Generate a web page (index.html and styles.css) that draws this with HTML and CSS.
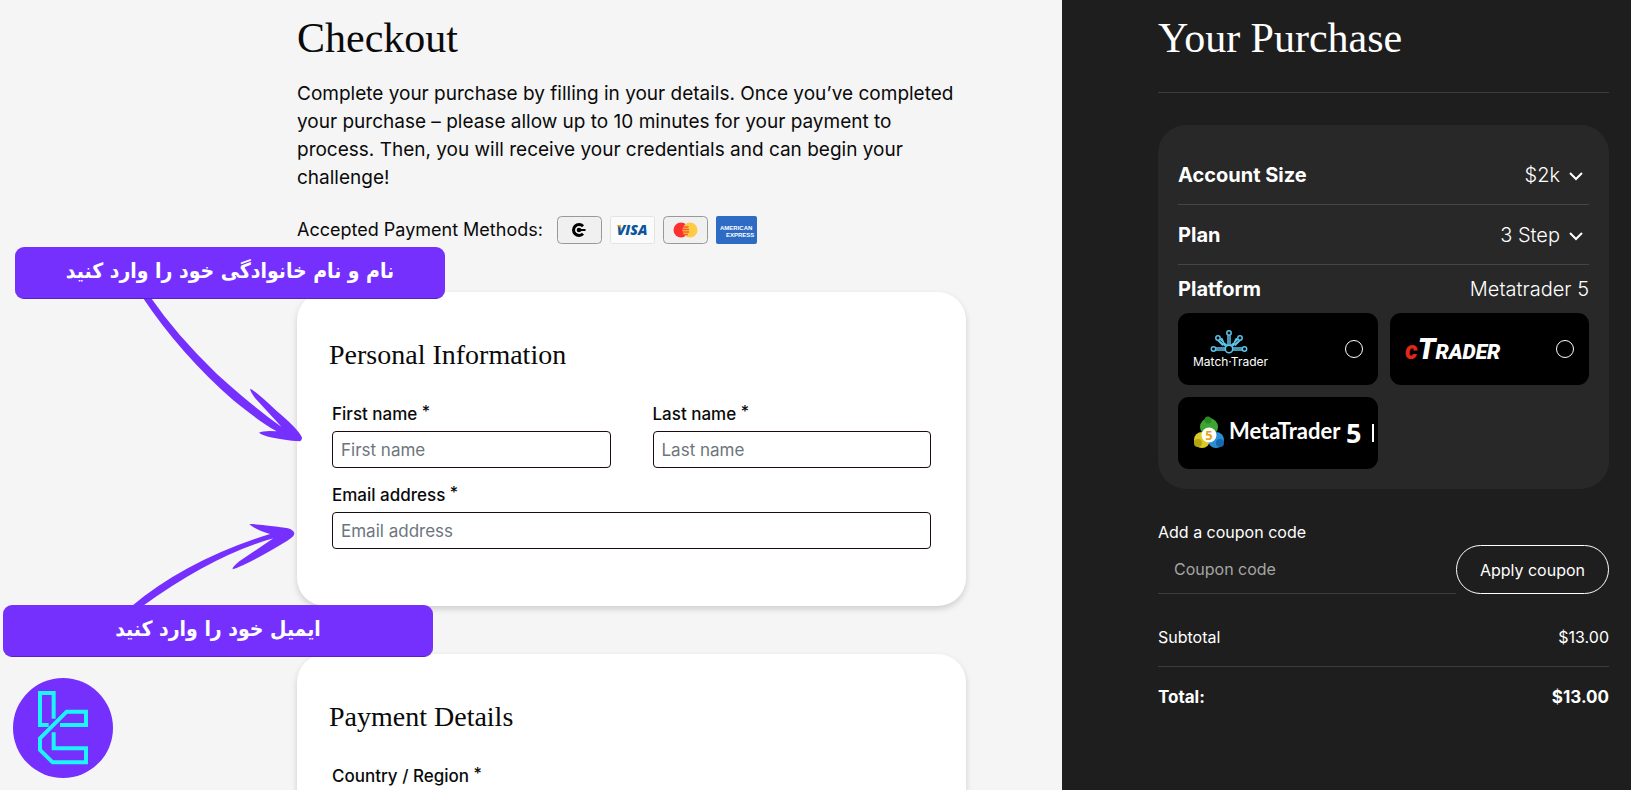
FILE: index.html
```
<!DOCTYPE html>
<html lang="en">
<head>
    <meta charset="utf-8">
    <title>Checkout</title>
    <link rel="stylesheet" href="styles.css">
</head>
<body>
    <div class="page">

        <!-- Checkout form -->
        <main class="checkout">
            <div class="checkout-inner">
                <h1>Checkout</h1>
                <p class="intro">Complete your purchase by filling in your details. Once you’ve completed your purchase – please allow up to 10 minutes for your payment to process. Then, you will receive your credentials and can begin your challenge!</p>

                <div class="methods">
                    <span>Accepted Payment Methods:</span>
                    <svg width="45" height="28" viewBox="0 0 45 28" role="img" aria-label="Crypto">
                        <rect x="0.5" y="0.5" width="44" height="27" rx="4" fill="#f0f0f0" stroke="#999"/>
                        <path d="M26 10.200A5.500 5.500 0 1 0 26 17.800" fill="none" stroke="#000" stroke-width="3"/>
                        <circle cx="22" cy="14" r="2.300"/>
                        <path d="M22 14H28.500" stroke="#000" stroke-width="2"/>
                    </svg>
                    <svg width="45" height="28" viewBox="0 0 45 28" role="img" aria-label="Visa">
                        <rect x="0.5" y="0.5" width="44" height="27" rx="2" fill="#fbfbfb" stroke="#e3e3e3"/>
                        <text class="visa" x="22" y="19" text-anchor="middle">VISA</text>
                        <path d="M6.500 9H10.500L12 14Q10 10.500 6.500 9Z" fill="#f0a81c"/>
                    </svg>
                    <svg width="45" height="28" viewBox="0 0 45 28" role="img" aria-label="Mastercard">
                        <rect x="0.5" y="0.5" width="44" height="27" rx="4" fill="#f0f0f0" stroke="#999"/>
                        <circle cx="18" cy="14" r="7.500" fill="#fb3131"/>
                        <circle cx="27" cy="14" r="7.500" fill="#ffcb45"/>
                        <path d="M20 11H25.500M19.500 13.500H26M19.500 16H26M20.500 18.500H25" stroke="#fb5a2c" stroke-width="1.500"/>
                    </svg>
                    <svg width="41" height="28" viewBox="0 0 41 28" role="img" aria-label="American Express">
                        <rect width="41" height="28" rx="2" fill="#2d6bc4"/>
                        <text class="amex" x="4" y="13.500">AMERICAN</text>
                        <text class="amex" x="10" y="20.500">EXPRESS</text>
                    </svg>
                </div>

                <section class="card">
                    <h2>Personal Information</h2>
                    <form class="fields">
                        <div class="field">
                            <label for="first">First name <sup>*</sup></label>
                            <input id="first" type="text" placeholder="First name">
                        </div>
                        <div class="field">
                            <label for="last">Last name <sup>*</sup></label>
                            <input id="last" type="text" placeholder="Last name">
                        </div>
                        <div class="field wide">
                            <label for="email">Email address <sup>*</sup></label>
                            <input id="email" type="email" placeholder="Email address">
                        </div>
                    </form>
                </section>

                <section class="card">
                    <h2>Payment Details</h2>
                    <form class="fields">
                        <div class="field wide">
                            <label for="country">Country / Region <sup>*</sup></label>
                            <input id="country" type="text">
                        </div>
                    </form>
                </section>
            </div>
        </main>

        <!-- Order summary -->
        <aside class="purchase">
            <h1>Your Purchase</h1>
            <div class="options">
                <div class="option">
                    <label for="size">Account Size</label>
                    <span class="picker">
                        <select id="size"><option>$2k</option></select>
                        <svg width="14" height="9" viewBox="0 0 14 9"><path d="M1 1L7 7L13 1"/></svg>
                    </span>
                </div>
                <div class="option">
                    <label for="plan">Plan</label>
                    <span class="picker">
                        <select id="plan"><option>3 Step</option></select>
                        <svg width="14" height="9" viewBox="0 0 14 9"><path d="M1 1L7 7L13 1"/></svg>
                    </span>
                </div>
                <div class="option platform">
                    <strong>Platform</strong>
                    <span>Metatrader 5</span>
                </div>
                <div class="tiles">
                    <label class="tile">
                        <svg width="80" height="42" viewBox="0 0 80 42" role="img" aria-label="Match-Trader">
                            <g fill="none" stroke="#5bc4ea" stroke-width="1.500">
                                <path d="M35 17.500V7.500M37 17.500V7.500M33 18.500L25 12M34 17.500L27 11M39 18.500L47 12M38 17.500L45 11M32 17L28.500 10M40 17L43.500 10M32.500 20H22.500M32.500 22H22M39.500 20H49.500M39.500 22H50M30 17.500L24.500 12M42 17.500L47.500 12"/>
                                <circle cx="36" cy="21" r="3.700" fill="#000"/>
                                <circle cx="36" cy="5" r="2.200" fill="#000"/>
                                <circle cx="25" cy="10" r="2.200" fill="#000"/>
                                <circle cx="47" cy="10" r="2.200" fill="#000"/>
                                <circle cx="20.500" cy="21" r="2.200" fill="#000"/>
                                <circle cx="51.500" cy="21" r="2.200" fill="#000"/>
                            </g>
                            <text class="match" x="0" y="38">Match·Trader</text>
                        </svg>
                        <input type="radio" name="platform">
                    </label>
                    <label class="tile">
                        <svg width="110" height="44" viewBox="0 0 110 44" role="img" aria-label="cTrader">
                            <text class="ctrader" x="0" y="32"><tspan class="red">c</tspan><tspan class="tall">T</tspan>RADER</text>
                        </svg>
                        <input type="radio" name="platform">
                    </label>
                    <label class="tile">
                        <svg width="186" height="36" viewBox="0 0 186 36" role="img" aria-label="MetaTrader 5">
                            <circle cx="16" cy="12" r="9" fill="#3fa535"/>
                            <circle cx="9" cy="25" r="8" fill="#dccb26"/>
                            <circle cx="23" cy="25" r="8" fill="#2b8fd8"/>
                            <circle cx="15" cy="5" r="3.500" fill="#2c8a26"/>
                            <circle cx="5" cy="28" r="4" fill="#b5a412"/>
                            <circle cx="27" cy="28" r="4" fill="#1768ad"/>
                            <circle cx="16" cy="20" r="7.500" fill="#fff"/>
                            <text class="coin" x="16" y="25" text-anchor="middle">5</text>
                            <text class="meta" x="36" y="24">MetaTrader</text>
                            <text class="five" x="153" y="28">5</text>
                            <path d="M180 9V27" stroke="#fff" stroke-width="2"/>
                        </svg>
                        <input type="radio" name="platform" checked>
                    </label>
                </div>
            </div>

            <form class="coupon">
                <label for="coupon">Add a coupon code</label>
                <div class="coupon-row">
                    <input id="coupon" type="text" placeholder="Coupon code">
                    <button type="button">Apply coupon</button>
                </div>
            </form>

            <div class="sum"><span>Subtotal</span><span>$13.00</span></div>
            <div class="sum total"><span>Total:</span><span>$13.00</span></div>
        </aside>
    </div>

    <!-- Guide notes over the form -->
    <svg class="arrow arrow-name" width="163" height="146" viewBox="420 200 489 438">
        <path d="M425 197Q540 370 700 510Q780 575 830 603Q790 600 777 607Q800 624 900 633Q908 628 905 619Q890 592 830 542Q770 485 751 475Q748 480 765 503L845 590Q760 530 650 430Q530 315 451 200Z"/>
    </svg>
    <svg class="arrow arrow-email" width="166" height="87" viewBox="390 60 498 261">
        <path d="M393 320Q560 180 810 102Q768 90 748 73Q752 69 860 84Q880 88 883 100Q883 110 862 122Q750 190 698 208Q695 203 718 184L820 115Q640 165 424 321Z"/>
    </svg>
    <div class="note note-name" lang="fa" dir="rtl">نام و نام خانوادگی خود را وارد کنید</div>
    <div class="note note-email" lang="fa" dir="rtl">ایمیل خود را وارد کنید</div>
    <svg class="badge" width="100" height="100" viewBox="0 0 300 300" role="img" aria-label="Logo">
        <circle cx="150" cy="150" r="150" fill="#7530fe"/>
        <g fill="none" stroke="#1df3fb" stroke-width="12">
            <path d="M122 122V45H81V141H107"/>
            <path d="M141 141H219V101H161L81 181V216L119 253H219V211H122V163"/>
        </g>
    </svg>
</body>
</html>
```
FILE: styles.css
```
* {
    box-sizing: border-box;
}

body {
    margin: 0;
    position: relative;
    font-family: Inter, sans-serif;
    color: #0a0a0a;
    background: #f5f5f5;
}

.page {
    display: grid;
    grid-template-columns: 1062fr 569fr;
    height: 100vh;
    overflow: hidden;
}

h1, h2 {
    margin: 0;
    font-family: "Liberation Serif", serif;
    font-weight: normal;
}

h1 {
    font-size: 42px;
    line-height: 48px;
}

h2 {
    font-size: 28px;
    line-height: 32px;
}

/* left side */
.checkout {
    display: flex;
    justify-content: flex-end;
    padding: 14px 96px 0 20px;
}

.checkout-inner {
    width: 100%;
    max-width: 669px;
}

.intro {
    margin: 18px 0 0;
    padding-right: 8px;
    font-size: 19px;
    line-height: 28px;
}

.methods {
    display: flex;
    align-items: center;
    gap: 8px;
    margin: 24px 0 48px;
    font-size: 18px;
    line-height: 28px;
}

.methods span {
    margin-right: 6px;
}

.visa {
    font: italic 800 14px "Open Sans", sans-serif;
    fill: #0b559b;
}

.amex {
    font: bold 6px "Liberation Sans", sans-serif;
    fill: #fff;
}

.card {
    min-height: 314px;
    margin-bottom: 48px;
    padding: 47px 35px 0 32px;
    background: #fff;
    border-radius: 28px;
    box-shadow: 0 3px 6px rgba(0, 0, 0, 0.16);
}

.fields {
    display: grid;
    grid-template-columns: 1fr 1fr;
    column-gap: 42px;
    row-gap: 15px;
    margin: 31px 0 0 3px;
}

.wide {
    grid-column: span 2;
}

.field label {
    display: block;
    height: 29px;
    font-size: 17px;
    font-weight: 500;
    line-height: 24px;
}

.field sup {
    font-size: 16px;
    line-height: 0;
    vertical-align: 3px;
}

.field input {
    display: block;
    width: 100%;
    height: 37px;
    padding: 0 8px;
    border: 1px solid #1a0a12;
    border-radius: 4px;
    font: 17px Inter, sans-serif;
}

.field input::placeholder {
    color: #6c757d;
}

/* right side */
.purchase {
    padding: 14px 22px 0 96px;
    color: #fff;
    background: #1e1e1e;
}

.purchase h1 {
    padding-bottom: 30px;
    border-bottom: 1px solid #3d3d3d;
}

.options {
    margin-top: 32px;
    padding: 20px;
    background: #282828;
    border-radius: 28px;
}

.option {
    display: flex;
    align-items: center;
    justify-content: space-between;
    height: 60px;
    border-bottom: 1px solid #454545;
    font-size: 20px;
}

.option label, .option strong {
    font-weight: 700;
}

.option span {
    font-weight: 300;
}

.picker {
    position: relative;
}

.picker select {
    appearance: none;
    padding: 0 29px 0 0;
    border: 0;
    color: #fff;
    background: #282828;
    font: 300 20px Inter, sans-serif;
    text-align-last: right;
}

.picker svg {
    position: absolute;
    right: 6px;
    top: 9px;
    fill: none;
    stroke: #fff;
    stroke-width: 2;
    pointer-events: none;
}

.platform {
    height: 48px;
    border: 0;
}

.tiles {
    display: grid;
    grid-template-columns: 1fr 1fr;
    gap: 12px;
}

.tile {
    display: flex;
    align-items: center;
    justify-content: space-between;
    min-width: 0;
    height: 72px;
    padding: 0 15px;
    overflow: hidden;
    background: #000;
    border-radius: 11px;
}

.tile svg {
    flex: none;
}

.tile input {
    appearance: none;
    flex: none;
    width: 18px;
    height: 18px;
    margin: 0;
    border: 1px solid #fff;
    border-radius: 50%;
}

.match {
    font: 12px Inter, sans-serif;
    fill: #fff;
}

.ctrader {
    font: italic 900 21px Roboto, sans-serif;
    fill: #fff;
}

.ctrader .red {
    font-size: 25px;
    fill: #e1261c;
}

.ctrader .tall {
    font-size: 29px;
}

.coin {
    font: bold 13px "Open Sans", sans-serif;
    fill: #e8a417;
}

.meta {
    font: bold 22px Lato, sans-serif;
    fill: #fff;
}

.five {
    font: bold 27px "Open Sans", sans-serif;
    fill: #fff;
}

.coupon {
    margin-top: 31px;
    font-size: 16px;
}

.coupon label {
    display: block;
    line-height: 25px;
}

.coupon-row {
    display: flex;
}

.coupon-row input {
    flex: 1;
    min-width: 0;
    height: 49px;
    padding: 0 16px;
    border: 0;
    border-bottom: 1px solid #3d3d3d;
    color: #fff;
    background: none;
    font: 16px Inter, sans-serif;
}

.coupon-row input::placeholder {
    color: #a5a5a5;
}

.coupon-row button {
    padding: 0 23px;
    border: 1px solid #fff;
    border-radius: 25px;
    color: #fff;
    background: none;
    font: 16px Inter, sans-serif;
}

.sum {
    display: flex;
    justify-content: space-between;
    margin-top: 31px;
    padding-bottom: 17px;
    border-bottom: 1px solid #3d3d3d;
    font-size: 16px;
    line-height: 24px;
}

.total {
    margin-top: 18px;
    border: 0;
    font-size: 17px;
    font-weight: 700;
}

/* notes and arrows on top of the form */
.note {
    position: absolute;
    width: 430px;
    height: 52px;
    border-bottom: 1px solid #5a20c8;
    border-radius: 9px;
    color: #fff;
    background: #7530fe;
    font: bold 21px "DejaVu Sans Condensed", "DejaVu Sans", sans-serif;
    line-height: 48px;
    text-align: center;
}

.note-name {
    left: 15px;
    top: 247px;
}

.note-email {
    left: 3px;
    top: 605px;
}

.arrow {
    position: absolute;
    fill: #7530fe;
}

.arrow-name {
    left: 140px;
    top: 297px;
}

.arrow-email {
    left: 130px;
    top: 520px;
}

.badge {
    position: absolute;
    left: 13px;
    top: 678px;
}
```
